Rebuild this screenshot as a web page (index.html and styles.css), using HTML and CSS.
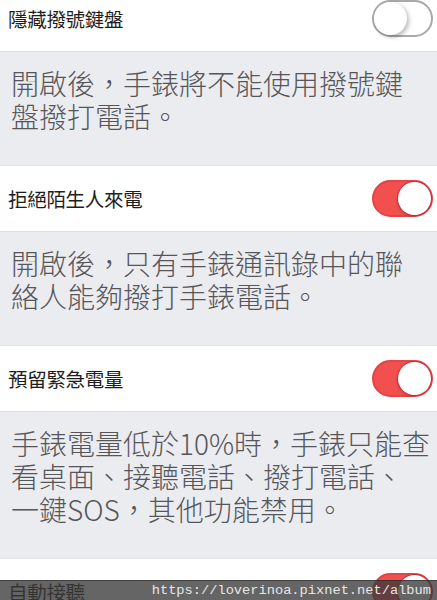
FILE: index.html
```html
<!DOCTYPE html>
<html lang="zh-Hant">
<head>
    <meta charset="UTF-8">
    <meta name="viewport" content="width=device-width, initial-scale=1.0">
    <title>手錶設定</title>
    <link rel="stylesheet" href="styles.css">
</head>
<body>
    <div class="screen">
        <div class="settings">
            <div class="row">
                <span class="label">隱藏撥號鍵盤</span>
                <span class="switch"></span>
            </div>
            <div class="note">開啟後，手錶將不能使用撥號鍵<br>盤撥打電話。</div>

            <div class="row">
                <span class="label">拒絕陌生人來電</span>
                <span class="switch on"></span>
            </div>
            <div class="note">開啟後，只有手錶通訊錄中的聯<br>絡人能夠撥打手錶電話。</div>

            <div class="row">
                <span class="label">預留緊急電量</span>
                <span class="switch on"></span>
            </div>
            <div class="note">手錶電量低於10%時，手錶只能查<br>看桌面、接聽電話、撥打電話、<br>一鍵SOS，其他功能禁用。</div>

            <div class="row">
                <span class="label">自動接聽</span>
                <span class="switch on"></span>
            </div>
        </div>
        <div class="watermark">https://loverinoa.pixnet.net/album</div>
    </div>
</body>
</html>
```

FILE: styles.css
```css
html, body {
    margin: 0;
    padding: 0;
    background: #ffffff;
}
.screen {
    position: relative;
    width: 437px;
    height: 600px;
    overflow: hidden;
    font-family: "Noto Sans CJK TC", "Noto Sans", sans-serif;
}
.settings {
    margin-top: -14px;
}
.row {
    display: flex;
    align-items: center;
    justify-content: space-between;
    height: 65px;
    padding: 0 4px 0 8px;
    background: #ffffff;
}
.label {
    font-size: 19.5px;
    color: #1e1e1e;
    letter-spacing: -0.3px;
}
.note {
    background: #ebecf0;
    border-top: 1px solid #dcdde1;
    border-bottom: 1px solid #e2e3e7;
    padding: 15px 0 32px 11px;
    font-size: 28px;
    font-weight: 300;
    line-height: 33px;
    color: #56565a;
    white-space: nowrap;
}
.switch {
    position: relative;
    box-sizing: border-box;
    width: 61px;
    height: 37px;
    border-radius: 19px;
    border: 2px solid #a9a9ab;
    background: #ffffff;
}
.switch::after {
    content: "";
    position: absolute;
    top: 0;
    left: 0;
    width: 33px;
    height: 33px;
    border-radius: 50%;
    background: #ffffff;
    box-shadow: 2px 2px 4px rgba(0, 0, 0, 0.28);
}
.switch.on {
    border-color: #e4434a;
    background: #f2504f;
}
.switch.on::after {
    left: auto;
    right: 0;
    box-shadow: 0 0 0 1px #c8303b, -1px 2px 3px rgba(0, 0, 0, 0.15);
}
.watermark {
    position: absolute;
    left: 0;
    right: 0;
    bottom: 0;
    height: 19px;
    background: rgba(58, 58, 58, 0.78);
    border-top: 1px solid rgba(40, 40, 40, 0.6);
    color: #e6e6e6;
    font-family: "Liberation Mono", monospace;
    font-size: 13.7px;
    line-height: 19px;
    text-align: right;
    padding-right: 6px;
}
```
